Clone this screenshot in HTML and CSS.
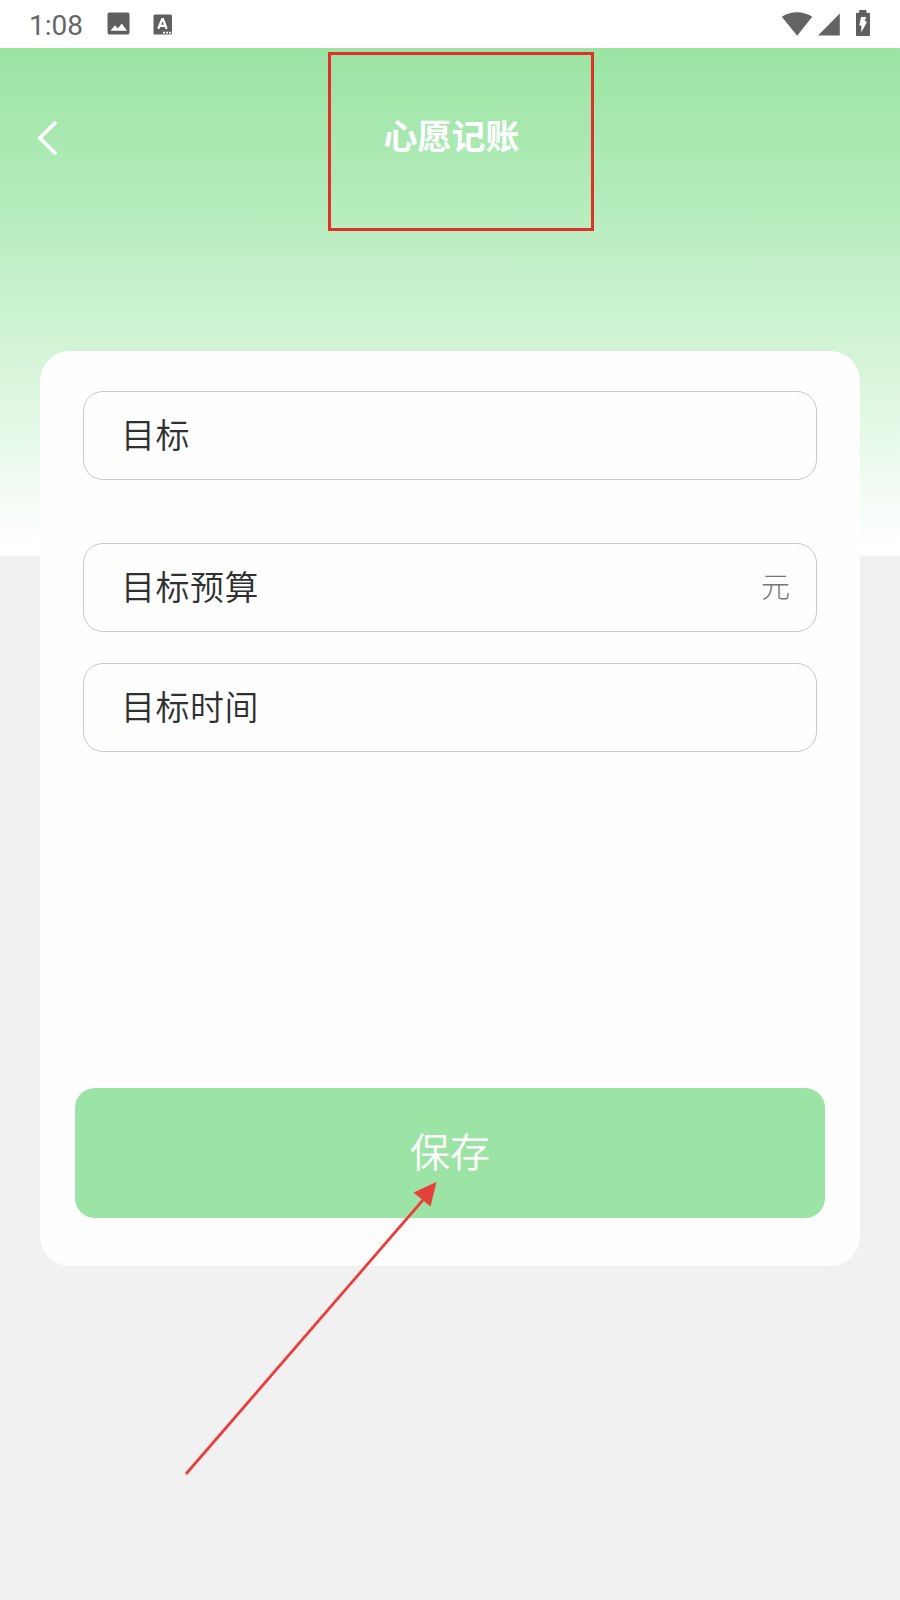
FILE: index.html
```html
<!DOCTYPE html>
<html lang="zh-CN">
<head>
    <meta charset="UTF-8">
    <meta name="viewport" content="width=device-width, initial-scale=1.0">
    <title>心愿记账</title>
    <link rel="stylesheet" href="styles.css">
</head>
<body>

    <div class="screen">
        <div class="status-bar">
            <span class="time">1:08</span>
            <svg class="icon-picture" width="23" height="23" viewBox="0 0 23 23">
                <path fill="#5f5f5f" fill-rule="evenodd" d="M2.5 0.5h18a2 2 0 0 1 2 2v18a2 2 0 0 1-2 2h-18a2 2 0 0 1-2-2v-18a2 2 0 0 1 2-2zM3.5 18.8h16.5l-5.2-7.3-4 5-2.8-3.3z"/>
            </svg>
            <svg class="icon-input" width="20" height="21" viewBox="0 0 20 21">
                <rect x="0.5" y="0.5" width="18.5" height="20" rx="1.5" fill="#5f5f5f"/>
                <path d="M5.3 14.8L9.2 5.2h.8l3.6 9.6M6.7 11.8h5.6" fill="none" stroke="#fff" stroke-width="2.300"/>
                <path d="M10 18.6h8.6" stroke="#fff" stroke-width="1.8" stroke-dasharray="2 1"/>
            </svg>
            <div class="status-right">
                <svg width="32" height="24" viewBox="0 0 32 24">
                    <path fill="#646464" d="M0.8 4.8C9.5-1.2 22.5-1.2 31.2 4.8L16.2 23.8z"/>
                </svg>
                <svg width="22" height="23" viewBox="0 0 22 23">
                    <path fill="#646464" d="M21.8 0.5v22H0z"/>
                </svg>
                <svg width="14" height="26" viewBox="0 0 14 26">
                    <path fill="#5f5f5f" d="M3.2 0h7.2v2.7H13a1 1 0 0 1 1 1V25a1 1 0 0 1-1 1H1a1 1 0 0 1-1-1V3.7a1 1 0 0 1 1-1h2.2z"/>
                    <path fill="#fff" d="M5 7h5.2L8.7 11.5h2.500L5.3 22.5V15.500H3.300z"/>
                </svg>
            </div>
        </div>

        <div class="header">
            <svg class="back" width="20" height="34" viewBox="0 0 20 34">
                <path d="M18 2L2.700 17l15.300 15" fill="none" stroke="#fff" stroke-width="3.800" stroke-linecap="round" stroke-linejoin="round"/>
            </svg>
            <h1>心愿记账</h1>
        </div>

        <div class="card">
            <div class="field field-goal">目标</div>
            <div class="field">目标预算<span class="unit">元</span></div>
            <div class="field">目标时间</div>
            <button type="button" class="btn">保存</button>
        </div>

        <!-- annotations over the screen -->
        <div class="mark-box"></div>
        <svg class="mark-arrow" width="260" height="300" viewBox="0 0 260 300">
            <path d="M6 294L243 20" stroke="#ee3b38" stroke-width="2.7"/>
            <path d="M256.5 2L233.5 12.5L250.5 26.5z" fill="#e5403c"/>
        </svg>
    </div>

</body>
</html>
```

FILE: styles.css
```css
body {
    margin: 0;
    background-color: #f1f1f1;
    font-family: "Noto Sans CJK SC", sans-serif;
}

.screen {
    position: relative;
    width: 900px;
    height: 1600px;
    overflow: hidden;
}

.status-bar {
    display: flex;
    align-items: center;
    box-sizing: border-box;
    height: 48px;
    padding: 0 30px 0 29px;
    background-color: #fff;
}

.time {
    width: 78px;
    color: #666;
    font-family: Roboto, sans-serif;
    font-size: 28px;
    line-height: 48px;
    padding-top: 3px;
}

.icon-picture {
    margin-top: -1px;
}

.icon-input {
    margin-left: 23px;
}

.status-right {
    display: flex;
    align-items: center;
    margin-left: auto;
}

.status-right svg + svg {
    margin-left: 5px;
    margin-top: 1px;
}

.status-right svg:last-child {
    margin-left: 16px;
    margin-top: -2px;
}

.header {
    display: flex;
    align-items: flex-start;
    box-sizing: border-box;
    height: 508px;
    padding: 62px 36px 0 37px;
    background: linear-gradient(#9be4a3 0%, #b1ebb8 27%, #d3f4d6 59%, #e8f9ea 78%, #fff 98%);
}

.back {
    margin-top: 11px;
}

.header h1 {
    flex: 1;
    margin: 0 18px 0 0;
    color: #fff;
    font-size: 34px;
    font-weight: bold;
    line-height: 50px;
    text-align: center;
}

.card {
    display: flex;
    flex-direction: column;
    box-sizing: border-box;
    width: 820px;
    height: 915px;
    margin: -205px auto 0;
    padding: 40px 35px 48px;
    background-color: #fefefe;
    border-radius: 30px;
}

.field {
    display: flex;
    align-items: center;
    box-sizing: border-box;
    height: 89px;
    margin: 0 8px 31px;
    padding: 0 26px 5px 37px;
    border: 1px solid #c9c9c9;
    border-radius: 20px;
    color: #303030;
    font-size: 34px;
    font-weight: 350;
    letter-spacing: 0.5px;
}

.field-goal {
    margin-bottom: 63px;
}

.unit {
    margin-left: auto;
    color: #777;
    font-size: 29px;
    font-weight: 300;
    letter-spacing: 0;
}

.btn {
    height: 130px;
    margin-top: auto;
    padding: 0 0 7px;
    background-color: #9ce4a5;
    border: none;
    border-radius: 20px;
    color: #fff;
    font-family: inherit;
    font-size: 40px;
    font-weight: 350;
}

.mark-box {
    position: absolute;
    left: 328px;
    top: 52px;
    box-sizing: border-box;
    width: 266px;
    height: 179px;
    border: 3px solid #df302a;
}

.mark-arrow {
    position: absolute;
    left: 180px;
    top: 1180px;
}
```
